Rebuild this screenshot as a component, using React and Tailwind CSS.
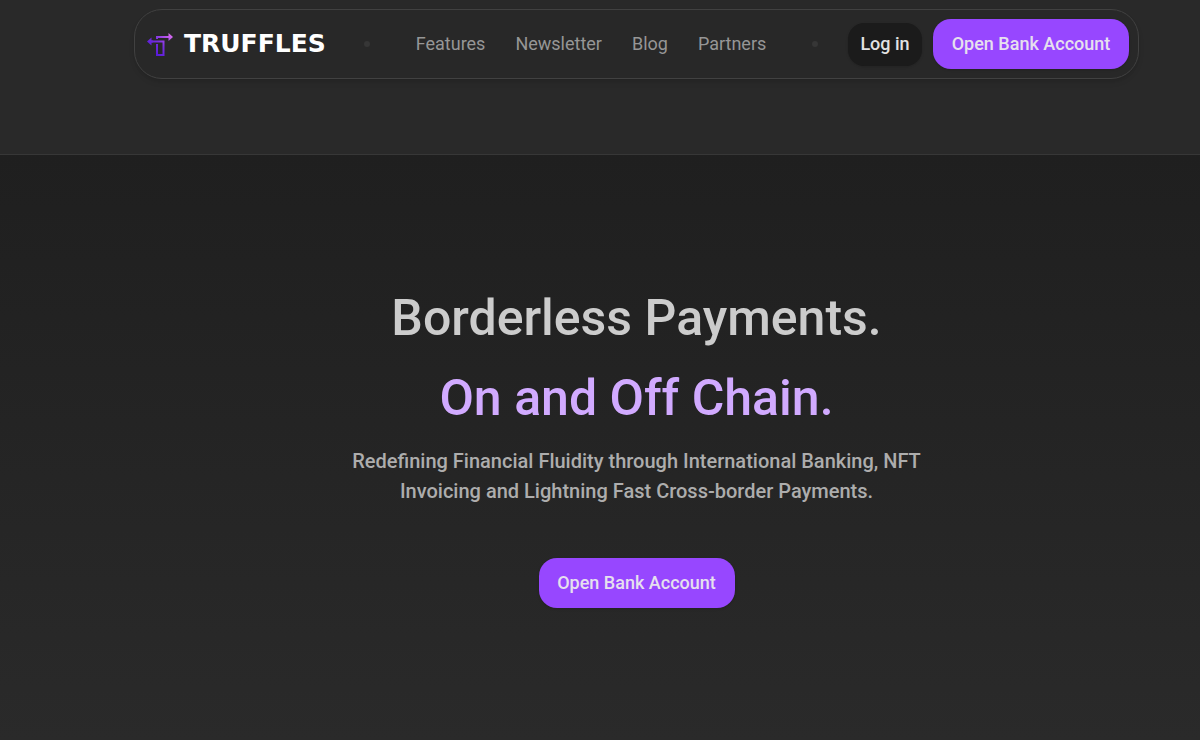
import React from "react";

const links = [
  { name: "Features", href: "#features" },
  { name: "Newsletter", href: "#newsletter" },
  { name: "Blog", href: "#blog" },
  { name: "Partners", href: "#partners" },
];

const LogoMark = () => (
  <svg width="26" height="26" viewBox="0 0 26 26" fill="none" aria-hidden="true">
    <defs>
      <linearGradient id="mark" x1="4" y1="24" x2="25" y2="3" gradientUnits="userSpaceOnUse">
        <stop stopColor="#4a12d6" />
        <stop offset="0.5" stopColor="#7a30e0" />
        <stop offset="1" stopColor="#e070f0" />
      </linearGradient>
    </defs>
    <g stroke="url(#mark)" strokeWidth="2">
      <path d="M10 8V6H23" />
      <path d="M3 10.5H16.5V24H10V13" />
    </g>
    <path d="M21.5 2L26 6L21.5 10V7H20V5H21.5Z" fill="url(#mark)" />
    <path d="M4.5 6.5L0 10.5L4.5 14.5V11.5H6V9.5H4.5Z" fill="url(#mark)" />
  </svg>
);

const Dot = () => <span className="w-1.5 h-1.5 rounded-full bg-[#363636]" />;

const OpenAccountButton = () => (
  <button className="h-[50px] w-[196px] rounded-[18px] bg-[#9747ff] text-lg font-medium text-[#e6e0ee] whitespace-nowrap shadow-sm cursor-pointer hover:bg-[#8a3af2]">
    Open Bank Account
  </button>
);

const Header = () => (
  <header className="flex h-[155px] items-start border-b border-[#373737] bg-[#292929] pt-[9px] pl-[73px]">
    <div className="mx-auto flex h-[70px] w-full max-w-[1005px] items-center justify-between rounded-[28px] border border-[#414141] bg-[#282828] pl-3 pr-[9px] shadow-md">
      <a href="#home" className="flex min-w-[187px] items-center gap-[11px] text-white">
        <LogoMark />
        <span className="font-['DejaVu_Sans',sans-serif] text-[25px] font-bold leading-[26px]">TRUFFLES</span>
      </a>
      <Dot />
      <nav className="flex gap-[30px] px-4 text-lg text-[#969696]">
        {links.map((link) => (
          <a key={link.name} href={link.href} className="hover:text-white">
            {link.name}
          </a>
        ))}
      </nav>
      <Dot />
      <div className="flex items-center gap-[11px]">
        <button className="h-[43px] w-[74px] rounded-2xl bg-[#1b1b1b] text-lg font-medium text-[#e2e2e2] shadow-sm cursor-pointer hover:bg-black">
          Log in
        </button>
        <OpenAccountButton />
      </div>
    </div>
  </header>
);

const Hero = () => (
  <main className="flex flex-1 flex-col items-center bg-linear-to-b from-[#1f1f1f] to-[#2a2a2a] pt-[123px] pb-32 pl-[73px] text-center">
    <h1 className="text-[50px] leading-[80px] font-medium text-[#cccccc]">
      Borderless Payments.
      <br />
      <span className="text-[#d1aaff]">On and Off Chain.</span>
    </h1>
    <p className="mt-2 mb-[52px] max-w-[600px] text-xl leading-[30px] font-medium text-[#adadad]">
      Redefining Financial Fluidity through International Banking, NFT
      Invoicing and Lightning Fast Cross-border Payments.
    </p>
    <OpenAccountButton />
  </main>
);

const App = () => {
  return (
    <div className="flex min-h-screen flex-col bg-[#292929] font-[Roboto,sans-serif]">
      <Header />
      <Hero />
    </div>
  );
};

export default App;
